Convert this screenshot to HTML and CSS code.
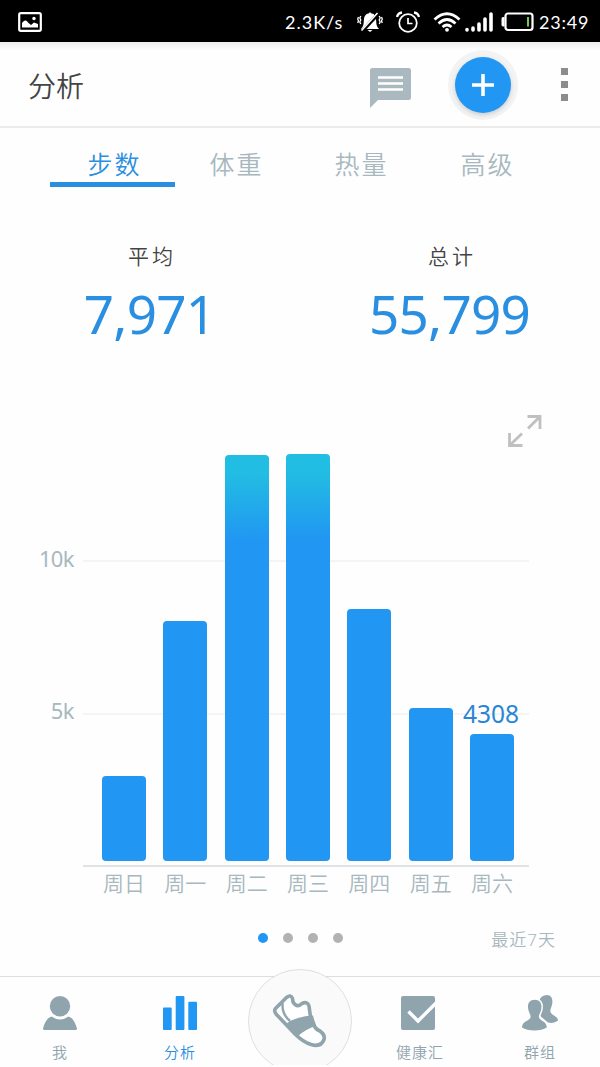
FILE: index.html
```
<!DOCTYPE html>
<html lang="zh-CN">

<head>
    <meta charset="UTF-8">
    <meta name="viewport" content="width=device-width, initial-scale=1.0">
    <title>分析</title>
    <link rel="stylesheet" href="styles.css">
</head>

<body>
    <div class="app">

        <div class="status">
            <svg class="status-pic" width="24" height="20" viewBox="0 0 24 20">
                <rect x="1.2" y="1.2" width="21.6" height="17.6" rx="1.6" fill="none" stroke="#fff" stroke-width="2.2" />
                <path d="M4 15.5V11C6 8 8 7.500 10 10.500L13 13L16 10.500L20 12V15.500Z" fill="#fff" />
                <circle cx="16" cy="6.500" r="1.700" fill="#fff" />
            </svg>
            <span class="speed">2.3K/s</span>
            <svg class="mute" width="26" height="22" viewBox="0 0 26 22">
                <path d="M4 18C7 15 6.500 12 7 8C7.500 4 10 2.500 12 2.300Q13 .3 14 2.300C16.500 2.500 18.500 4 19 8C19.500 12 19 15 22 18Z" fill="#fff" />
                <path d="M10.500 19H15.500L13 21Z" fill="#fff" />
                <path d="M4.500 21L22 2" stroke="#000" stroke-width="3.500" />
                <path d="M4.500 19.500L20.500 2" stroke="#fff" stroke-width="1.600" />
                <path d="M3.800 5L2.800 7L3.800 9L2.800 11L3.800 13M1.500 6L.7 8L1.500 10L.7 12M22.200 5L23.200 7L22.200 9L23.200 11L22.200 13M24.500 6L25.300 8L24.500 10L25.300 12" fill="none" stroke="#fff" stroke-width="1.300" />
            </svg>
            <svg class="alarm" width="24" height="22" viewBox="0 0 24 22">
                <circle cx="12" cy="12" r="8.800" fill="none" stroke="#fff" stroke-width="1.800" />
                <path d="M12 7V12.500H16.500" fill="none" stroke="#fff" stroke-width="1.700" />
                <path d="M1 6Q2 2 6 1.500M23 6Q22 2 18 1.500" fill="none" stroke="#fff" stroke-width="2.300" />
            </svg>
            <svg class="wifi" width="28" height="20" viewBox="0 0 28 20">
                <path d="M1.500 7.500Q14 -4 26.500 7.500M5.500 11.500Q14 3.500 22.500 11.500M9.500 15Q14 11 18.500 15" fill="none" stroke="#fff" stroke-width="2.700" />
                <circle cx="14" cy="17.800" r="1.900" fill="#fff" />
            </svg>
            <svg class="signal" width="28" height="20" viewBox="0 0 28 20">
                <path d="M2 17.500V18M8 16V18M14 12V18M20 7V18M26 2V18" stroke="#fff" stroke-width="3.600" stroke-linecap="round" />
            </svg>
            <svg class="battery" width="33" height="20" viewBox="0 0 33 20">
                <rect x="4.500" y="1.500" width="27" height="16.500" rx="2.500" fill="none" stroke="#fff" stroke-width="2.200" />
                <path d="M3.500 5H2Q.5 5 .5 7V12.500Q.5 14.500 2 14.500H3.500Z" fill="#fff" />
                <path d="M27 5V14.500" stroke="#78c850" stroke-width="2" />
            </svg>
            <span class="clock">23:49</span>
        </div>

        <div class="header">
            <h1>分析</h1>
            <svg class="chat" width="42" height="40" viewBox="0 0 42 40">
                <path d="M2.500 0H38.500Q41 0 41 2.500V29.500Q41 32 38.500 32H8L0 40V2.500Q0 0 2.500 0Z" fill="#aab9bf" />
                <path d="M8 9.500H33M8 15.500H33M8 21.500H33" stroke="#fff" stroke-width="2.300" />
            </svg>
            <div class="add">
                <svg width="22" height="22" viewBox="0 0 22 22">
                    <path d="M11 0V22M0 11H22" stroke="#fff" stroke-width="3.600" />
                </svg>
            </div>
            <div class="more"><i></i><i></i><i></i></div>
        </div>

        <div class="tabs">
            <div class="tab active">步数</div>
            <div class="tab">体重</div>
            <div class="tab">热量</div>
            <div class="tab">高级</div>
        </div>

        <div class="stats">
            <div class="stat">
                <p>平均</p>
                <strong>7,971</strong>
            </div>
            <div class="stat">
                <p>总计</p>
                <strong>55,799</strong>
            </div>
        </div>

        <div class="expand">
            <svg width="34" height="34" viewBox="0 0 34 34">
                <path d="M19.500 2.500H32V15M32 2.500L20 14.500M1.500 19V31.500H14.500M1.500 31.500L14 19.500" fill="none" stroke="#c0c0c0" stroke-width="2.800" />
            </svg>
        </div>

        <div class="chart">
            <div class="scale">
                <span>10k</span>
                <span>5k</span>
            </div>
            <div class="plot">
                <div class="lines"><hr><hr></div>
                <div class="bars">
                    <div class="bar" style="height: 85px"></div>
                    <div class="bar" style="height: 240px"></div>
                    <div class="bar high" style="height: 406px"></div>
                    <div class="bar high" style="height: 407px"></div>
                    <div class="bar" style="height: 252px"></div>
                    <div class="bar" style="height: 153px"></div>
                    <div class="bar" style="height: 127px"><span>4308</span></div>
                </div>
            </div>
            <div class="days">
                <span>周日</span>
                <span>周一</span>
                <span>周二</span>
                <span>周三</span>
                <span>周四</span>
                <span>周五</span>
                <span>周六</span>
            </div>
        </div>

        <div class="pager">
            <div class="dots"><i class="on"></i><i></i><i></i><i></i></div>
            <span class="range">最近7天</span>
        </div>

        <div class="nav">
            <div class="item">
                <svg width="34" height="34" viewBox="0 0 34 34">
                    <circle cx="17" cy="10.300" r="10.200" fill="#90a4ae" />
                    <path d="M8.500 20.500Q17 26.500 25.500 20.500C30 22 32 26 34 32.500Q34 34 32.500 34H1.500Q0 34 0 32.500C2 26 4 22 8.500 20.500Z" fill="#90a4ae" />
                </svg>
                <span>我</span>
            </div>
            <div class="item current">
                <svg width="34" height="34" viewBox="0 0 34 34">
                    <rect x="0" y="11.500" width="8.700" height="22.500" rx="1" fill="#2196f3" />
                    <rect x="12.700" y="0" width="8.700" height="34" rx="1" fill="#2196f3" />
                    <rect x="25.300" y="5.700" width="8.700" height="28.300" rx="1" fill="#2196f3" />
                </svg>
                <span>分析</span>
            </div>
            <div class="item">
                <div class="round">
                    <svg width="56" height="56" viewBox="0 0 56 56">
                        <path d="M3.500 15.500L14.500 4.500Q19 1 20.500 5.500L21 9Q25 15.500 30 10.500Q35.500 8 37 13L38.500 24L42 31.500Q43 36 48 38Q53.500 42 52 46.500Q49 54.500 39 51.500Q31 49 23 41L4.500 21.500Q1.500 18 3.500 15.500Z" fill="#fff" stroke="#90a4ae" stroke-width="3.600" stroke-linejoin="round" />
                        <path d="M10.500 10C10 19 13 24 18 28" fill="none" stroke="#90a4ae" stroke-width="2.400" />
                        <path d="M14.500 30.500L19 27.500Q29 23 41 22.500L43.700 33Q34 36 26 43Z" fill="#90a4ae" />
                    </svg>
                </div>
            </div>
            <div class="item">
                <svg width="38" height="34" viewBox="0 0 38 34">
                    <rect width="34" height="34" rx="2" fill="#90a4ae" />
                    <path d="M7.500 15.500L17 25L35 7" fill="none" stroke="#fff" stroke-width="3.400" />
                </svg>
                <span>健康汇</span>
            </div>
            <div class="item group">
                <svg width="36" height="36" viewBox="0 0 36 36">
                    <path d="M25 0C29.500 0 30.800 4 30.300 8C30 12 27 15 29 18C31 21 36 21.500 36 25.500Q32 29 26 27.500L17 20V6Q19 0 25 0Z" fill="#90a4ae" />
                    <path d="M12.700 4.800C18 4.800 19.800 8.500 19.400 13C19 18 15.500 20.500 17.500 23.500C20 26.500 24.800 27 24.800 32.500Q20 35.500 12.500 35.500Q4.500 35.500 0 32.500C0 27 5 26.500 8 23.500C10 20.500 6.500 18 6 13C5.500 8.500 7.500 4.800 12.700 4.800Z" fill="#90a4ae" stroke="#fff" stroke-width="3" paint-order="stroke" />
                </svg>
                <span>群组</span>
            </div>
        </div>

    </div>
</body>

</html>
```
FILE: styles.css
```
* {
    margin: 0;
    padding: 0;
    box-sizing: border-box;
}

body {
    background: #fefefe;
    font-family: "Noto Sans", "Noto Sans CJK SC", sans-serif;
}

svg {
    display: block;
    flex: none;
}

.app {
    width: 600px;
    height: 1065px;
    overflow: hidden;
}

/* 状态栏 */
.status {
    display: flex;
    align-items: center;
    height: 42px;
    padding: 2px 8px 0 18px;
    background: #000;
    color: #fff;
    font-family: Lato, sans-serif;
    font-size: 18px;
}

.speed {
    margin-left: auto;
    width: 58px;
    letter-spacing: 1px;
    white-space: nowrap;
}

.mute {
    margin-left: 14px;
}

.alarm {
    margin-left: 13px;
}

.wifi {
    margin-left: 13px;
}

.signal {
    margin-left: 4px;
}

.battery {
    margin-left: 8px;
}

.clock {
    width: 53px;
    margin-left: 5px;
    letter-spacing: 0.8px;
    white-space: nowrap;
}

/* 标题栏 */
.header {
    display: flex;
    align-items: center;
    height: 86px;
    padding: 1px 32px 0 28px;
    border-bottom: 2px solid #ebebeb;
    background: linear-gradient(#eee, #fefefe 8px);
}

.header h1 {
    margin-right: auto;
    color: #444;
    font-family: "Noto Sans CJK SC", sans-serif;
    font-size: 28px;
    font-weight: 350;
}

.chat {
    margin-top: 7px;
}

.add {
    display: flex;
    align-items: center;
    justify-content: center;
    width: 56px;
    height: 56px;
    margin: 0 50px 0 43px;
    border-radius: 50%;
    background: #2196f3;
    box-shadow: 0 2px 4px 0 #ccc, 0 0 0 7px #f3f3f3;
}

.more {
    display: flex;
    flex-direction: column;
    gap: 6px;
}

.more i {
    width: 7px;
    height: 7px;
    background: #8c8c8c;
}

/* 选项卡 */
.tabs {
    display: flex;
    height: 59px;
    padding: 0 50px;
}

.tab {
    width: 125px;
    padding-right: 2px;
    border-bottom: 5px solid transparent;
    color: #a8b8bf;
    font-size: 25px;
    font-weight: 350;
    letter-spacing: 2px;
    line-height: 72px;
    text-align: center;
}

.tab:last-child {
    padding-right: 0;
}

.active {
    padding-right: 0;
    padding-left: 4px;
    border-color: #2a8fe0;
    color: #2a8fe0;
}

/* 平均 总计 */
.stats {
    display: flex;
    height: 227px;
    padding-top: 54px;
}

.stat {
    flex: 1;
    text-align: center;
}

.stat p {
    padding-left: 4px;
    color: #444;
    font-size: 21px;
    font-weight: 350;
    letter-spacing: 3px;
    line-height: 30px;
}

.stat strong {
    display: block;
    padding-right: 1px;
    color: #2a8fe0;
    font-size: 53px;
    font-weight: 400;
    letter-spacing: -0.8px;
    line-height: 86px;
}

.expand {
    display: flex;
    justify-content: flex-end;
    height: 34px;
    padding-right: 58px;
}

/* 图表 */
.chart {
    display: grid;
    grid-template-columns: 74px 446px;
    grid-template-rows: 419px 33px;
    column-gap: 9px;
}

.scale {
    padding-top: 95px;
    color: #a8b8bf;
    font-size: 22px;
    letter-spacing: -0.6px;
    line-height: 30px;
    text-align: right;
}

.scale span {
    display: block;
    height: 152px;
}

.plot {
    display: grid;
    border-bottom: 2px solid #e0e2e3;
}

.lines,
.bars {
    grid-area: 1 / 1;
}

.lines {
    padding-top: 112px;
}

.lines hr {
    height: 2px;
    margin-bottom: 151px;
    border: 0;
    background: #f3f4f4;
}

.bars {
    display: flex;
    align-items: flex-end;
    justify-content: space-between;
    padding: 0 15px 5px 19px;
}

.bar {
    width: 44px;
    border-radius: 4px;
    background: #2196f3;
}

.high {
    background: linear-gradient(#22bde2 18px, #2196f3 86px);
}

.bar span {
    display: flex;
    justify-content: center;
    margin-top: -36px;
    margin-left: -2px;
    color: #2a86d4;
    font-size: 24.5px;
    line-height: 32px;
}

.days {
    display: flex;
    grid-column: 2;
    justify-content: space-between;
    padding: 0 15px 0 19px;
    color: #a8b8bf;
    font-family: "Noto Sans CJK SC", sans-serif;
    font-size: 21px;
    font-weight: 350;
    line-height: 31px;
}

.days span {
    display: flex;
    justify-content: center;
    width: 44px;
    white-space: nowrap;
}

.pager {
    display: grid;
    grid-template-columns: 1fr auto 1fr;
    align-items: center;
    height: 76px;
    padding-right: 44px;
    padding-left: 45px;
}

.dots {
    display: flex;
    grid-column: 2;
    gap: 15px;
}

.dots i {
    width: 10px;
    height: 10px;
    border-radius: 50%;
    background: #b2b2b2;
}

.dots .on {
    background: #2196f3;
}

.range {
    color: #a8b8bf;
    font-size: 17px;
    font-weight: 350;
    letter-spacing: 1px;
    text-align: right;
}

/* 底部导航 */
.nav {
    display: flex;
    height: 91px;
    border-top: 1px solid #dcdfe0;
}

.item {
    display: flex;
    flex: 1;
    flex-direction: column;
    align-items: center;
    height: 89px;
    padding-top: 19px;
    color: #90a4ae;
}

.item span {
    margin-top: auto;
    font-size: 15px;
    font-weight: 350;
    letter-spacing: 1px;
    line-height: 28px;
}

.group {
    padding-top: 18px;
}

.current {
    color: #2a8fe0;
}

.round {
    display: flex;
    flex: none;
    align-items: center;
    justify-content: center;
    width: 104px;
    height: 104px;
    margin-top: -27px;
    border: 1px solid #dfdfdf;
    border-radius: 50%;
    background: #fafafa;
}
```
